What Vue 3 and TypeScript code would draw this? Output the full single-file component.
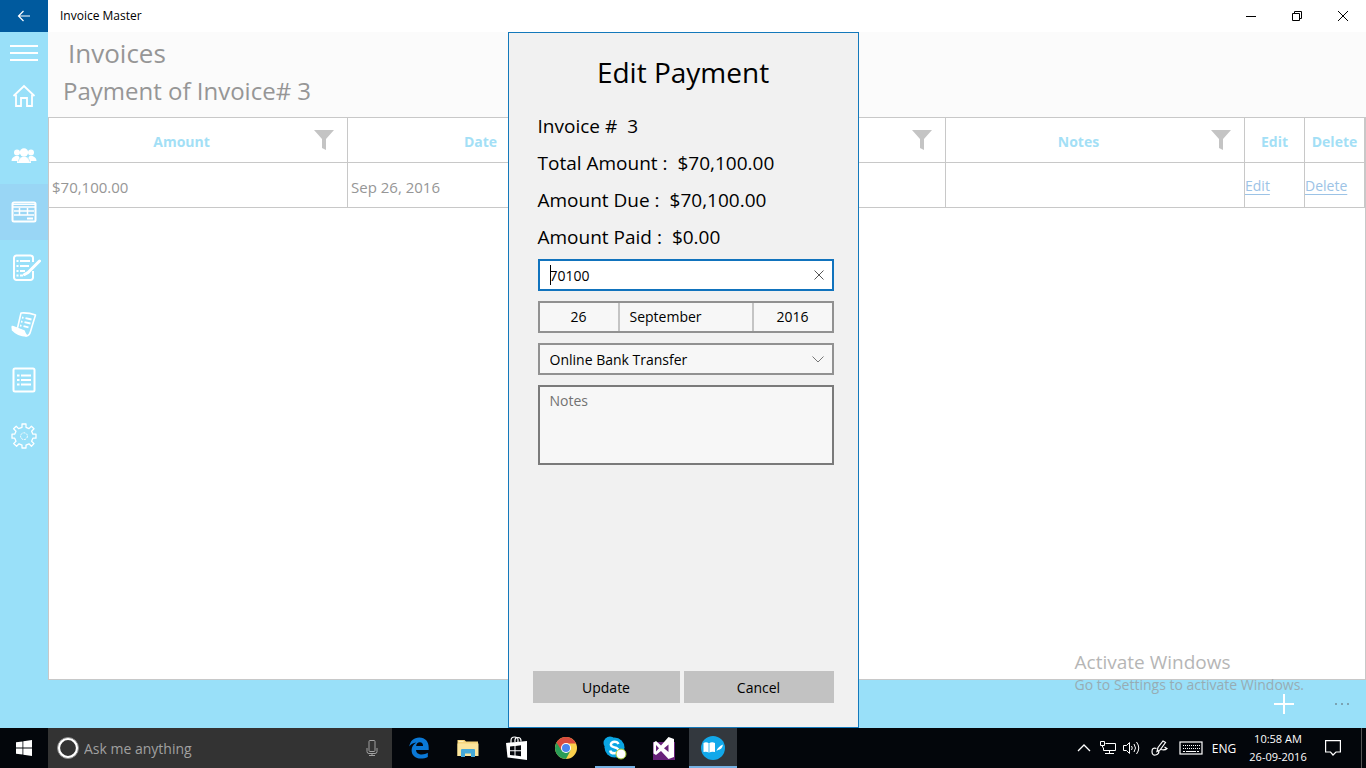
<script setup lang="ts">
import { ref } from 'vue'

interface Payment {
  id: number
  amount: string
  date: string
  method: string
  notes: string
}

interface Summary {
  label: string
  value: string
}

const payments: Payment[] = [
  { id: 1, amount: '$70,100.00', date: 'Sep 26, 2016', method: '', notes: '' },
]

const columns: string[] = ['Amount', 'Date', 'Payment Method', 'Notes']

const summary: Summary[] = [
  { label: 'Invoice #', value: '3' },
  { label: 'Total Amount :', value: '$70,100.00' },
  { label: 'Amount Due :', value: '$70,100.00' },
  { label: 'Amount Paid :', value: '$0.00' },
]

const methods: string[] = ['Online Bank Transfer', 'Cash', 'Cheque']

const amount = ref('70100')
const method = ref('Online Bank Transfer')
const notes = ref('')
</script>

<template>
  <div class="desktop">
    <header class="titlebar">
      <button class="back" type="button" aria-label="Back">
        <svg width="14" height="12" viewBox="0 0 14 12" fill="none" stroke="#fff" stroke-width="1.2">
          <path d="M13 6H1.5M6.5 1L1.5 6l5 5" />
        </svg>
      </button>
      <span class="app-name">Invoice Master</span>
      <div class="window-buttons">
        <button type="button" aria-label="Minimize">
          <svg width="12" height="12" viewBox="0 0 12 12" stroke="#000"><path d="M1 6.5h10" /></svg>
        </button>
        <button type="button" aria-label="Restore">
          <svg width="12" height="12" viewBox="0 0 12 12" fill="none" stroke="#000">
            <path d="M1.5 3.5h7v7h-7zM3.5 3.5v-2h7v7h-2" />
          </svg>
        </button>
        <button type="button" aria-label="Close">
          <svg width="12" height="12" viewBox="0 0 12 12" stroke="#000"><path d="M1 1l10 10M11 1L1 11" /></svg>
        </button>
      </div>
    </header>

    <div class="app">
      <div class="workspace">
        <nav class="sidebar" aria-label="Main">
          <button class="nav-item menu" type="button" aria-label="Menu">
            <svg width="28" height="18" viewBox="0 0 28 18" stroke="#fff" stroke-width="2">
              <path d="M0 2h28M0 9h28M0 16h28" />
            </svg>
          </button>
          <button class="nav-item home" type="button" aria-label="Home">
            <svg width="24" height="24" viewBox="0 0 24 24" fill="none" stroke="#fff" stroke-width="1.8">
              <path d="M1.5 12L12 2l10.500 10" />
              <path d="M4 10.500V22h5v-8h6v8h5V10.500" />
            </svg>
          </button>
          <button class="nav-item" type="button" aria-label="Customers">
            <svg width="26" height="16" viewBox="0 0 26 16" fill="#fff">
              <circle cx="6" cy="4.500" r="3" />
              <circle cx="20" cy="4.500" r="3" />
              <path d="M.5 13c0-3 2-4 4-5h3l1 1.500L7 13zM25.500 13c0-3-2-4-4-5h-3l-1 1.500L19 13z" />
              <circle cx="13" cy="4.500" r="4.200" />
              <path d="M6 15c0-4 2-5 4.500-6h5c2.500 1 4.500 2 4.500 6z" />
              <path d="M7.500 13.500c0-2 1-3.500 3-4.300M18.500 13.500c0-2-1-3.500-3-4.300" fill="none" stroke="#99e0f9" stroke-width=".6" />
            </svg>
          </button>
          <button class="nav-item selected" type="button" aria-label="Invoices" aria-current="page">
            <svg width="26" height="22" viewBox="0 0 26 22" fill="none" stroke="#fff">
              <rect x="1.500" y="1.500" width="23" height="19" rx="1.500" stroke-width="2" />
              <path d="M2 6h22M3 10h20M3 14h20" stroke-width="1.600" />
              <path d="M2 3.500h22" stroke-width="1" />
              <path d="M8.500 7v7M16.500 7v7" stroke-width="1.500" />
              <path d="M16 17.500h6" stroke-width="2" />
            </svg>
          </button>
          <button class="nav-item" type="button" aria-label="Estimates">
            <svg width="34" height="28" viewBox="-4 0 34 28" fill="none" stroke="#fff" stroke-width="2">
              <path d="M22 8V4a2.500 2.500 0 0 0-2.500-2.500h-14A2.500 2.500 0 0 0 3 4v19.500A2.500 2.500 0 0 0 5.500 26h14a2.500 2.500 0 0 0 2.500-2.500V17" />
              <path d="M9 7h10M9 12h9M9 17h5M9 21.500h3M5.500 7h2M5.500 12h2M5.500 17h2M5.500 21.500h2" stroke-width="1.800" />
              <path d="M28.500 7L17 18.500l-3.500 2" stroke-width="3" stroke-linecap="round" />
            </svg>
          </button>
          <button class="nav-item" type="button" aria-label="Receipts">
            <svg width="26" height="26" viewBox="0 0 26 26" fill="none" stroke="#fff" stroke-width="1.600">
              <path d="M6.500 17L10 2q8-.5 14.500 2-2.500 8-5 16.500-1 4-4 4.500L2 18q-1-1-.5-2.500L13 20q1 3 2.500 4.500" stroke-linejoin="round" />
              <path d="M1.500 16L13 20.500q0 3 2.500 4.500-9-.5-14-6z" fill="#fff" />
              <path d="M11 6.500l1.500.3M14.500 7.200l6 1.300M10 10.500l1.500.3M13.500 11.200l6 1.300M9 14.500l1.500.3M12.500 15.200l5 1.200" stroke-width="1.800" />
            </svg>
          </button>
          <button class="nav-item" type="button" aria-label="Items">
            <svg width="24" height="26" viewBox="0 0 24 26" fill="none" stroke="#fff" stroke-width="2">
              <rect x="1.500" y="1.500" width="21" height="23" rx="1.500" />
              <path d="M5 8.500h2.500M5 13h2.500M5 17.500h2.500M9 8.500h10M9 13h10M9 17.500h10" stroke-width="1.800" />
            </svg>
          </button>
          <button class="nav-item" type="button" aria-label="Settings">
            <svg width="26" height="26" viewBox="0 0 26 26" fill="none" stroke="#fff" stroke-width="1.300" stroke-linejoin="round">
              <path d="M11 1h4v3.300l3 1.300 2.400-2.400 2.600 2.600-2.400 2.400 1.300 3H25v4h-3.100l-1.300 3 2.400 2.400-2.600 2.600-2.400-2.400-3 1.300V25h-4v-2.900l-3-1.300-2.400 2.400L2.600 20.600 5 18.200l-1.300-3H1v-4h2.700l1.300-3-2.400-2.400 2.600-2.600L7.600 5.600l3.400-1.300z" />
              <circle cx="13" cy="13.200" r="3.400" stroke-width="1" stroke-dasharray="2 1" />
            </svg>
          </button>
        </nav>

        <main class="page">
          <div class="page-head">
            <h1>Invoices</h1>
            <h2>Payment of Invoice# 3</h2>
          </div>
          <div class="grid-frame">
            <table class="grid">
              <colgroup>
                <col v-for="c in columns" :key="c" />
                <col class="narrow" />
                <col class="narrow" />
              </colgroup>
              <thead>
                <tr>
                  <th v-for="c in columns" :key="c" scope="col">
                    <div class="head-cell">
                      <span>{{ c }}</span>
                      <button type="button" :aria-label="'Filter ' + c">
                        <svg width="20" height="20" viewBox="0 0 20 20" fill="#c4c4c4">
                          <path d="M0 0h20l-8 9v11l-4-2V9z" />
                        </svg>
                      </button>
                    </div>
                  </th>
                  <th scope="col">Edit</th>
                  <th scope="col">Delete</th>
                </tr>
              </thead>
              <tbody>
                <tr v-for="p in payments" :key="p.id">
                  <td>{{ p.amount }}</td>
                  <td>{{ p.date }}</td>
                  <td>{{ p.method }}</td>
                  <td>{{ p.notes }}</td>
                  <td class="action"><a href="#edit">Edit</a></td>
                  <td class="action"><a href="#delete">Delete</a></td>
                </tr>
              </tbody>
            </table>
          </div>
        </main>
      </div>

      <footer class="commandbar">
        <button type="button" aria-label="Add">
          <svg width="20" height="20" viewBox="0 0 20 20" stroke="#fff" stroke-width="2"><path d="M0 10h20M10 0v20" /></svg>
        </button>
        <button type="button" aria-label="More">
          <svg width="16" height="4" viewBox="0 0 16 4" fill="#7ba3b3">
            <path d="M1 1h2v2H1zM7 1h2v2H7zM13 1h2v2h-2z" />
          </svg>
        </button>
      </footer>

      <div class="overlay">
        <form class="dialog" role="dialog" aria-labelledby="dialog-title" @submit.prevent>
          <h3 id="dialog-title">Edit Payment</h3>
          <dl class="summary">
            <div v-for="s in summary" :key="s.label">
              <dt>{{ s.label }}</dt>
              <dd>{{ s.value }}</dd>
            </div>
          </dl>
          <div class="fields">
            <div class="field amount">
              <input v-model="amount" type="text" aria-label="Amount" />
              <button type="button" aria-label="Clear" @click="amount = ''">
                <svg width="10" height="10" viewBox="0 0 10 10" stroke="#555">
                  <path d="M.5.5l9 9M9.500.5l-9 9" />
                </svg>
              </button>
            </div>
            <button class="field date" type="button" aria-label="Payment date">
              <span>26</span>
              <span class="month">September</span>
              <span>2016</span>
            </button>
            <div class="field method">
              <select v-model="method" aria-label="Payment method">
                <option v-for="m in methods" :key="m">{{ m }}</option>
              </select>
              <svg width="12" height="7" viewBox="0 0 12 7" fill="none" stroke="#777"><path d="M.5.5L6 6l5.500-5.500" /></svg>
            </div>
            <textarea v-model="notes" class="field notes" placeholder="Notes" aria-label="Notes"></textarea>
          </div>
          <div class="actions">
            <button type="submit">Update</button>
            <button type="button">Cancel</button>
          </div>
        </form>
      </div>
      <div class="activation">
        <strong>Activate Windows</strong>
        <span>Go to Settings to activate Windows.</span>
      </div>
    </div>

    <div class="taskbar">
      <button class="start" type="button" aria-label="Start">
        <svg width="16" height="16" viewBox="0 0 16 16" fill="#fff">
          <path d="M0 2.300L6.500 1.400v6.200H0zM7.300 1.300L16 0v7.600H7.300zM0 8.400h6.500v6.200L0 13.700zM7.300 8.400H16V16l-8.700-1.300z" />
        </svg>
      </button>
      <label class="search">
        <svg width="22" height="22" viewBox="0 0 22 22" fill="none" stroke="#fff"><circle cx="11" cy="11" r="9.200" stroke-width="2.600" /><circle cx="11" cy="11" r="10.500" stroke="#888" stroke-width="1" /></svg>
        <input type="text" placeholder="Ask me anything" aria-label="Search" />
        <svg width="12" height="18" viewBox="0 0 12 18" fill="none" stroke="#a0a0a0">
          <rect x="3" y="1.500" width="6" height="11" rx="1" />
          <path d="M1 9v3.500q0 2 2 2h6q2 0 2-2V9M6 14.500v2M3 16.500h6" />
        </svg>
      </label>
      <div class="pinned">
        <button type="button" aria-label="Edge">
          <svg width="20" height="22" viewBox="0 0 20 22" fill="#0a78d6">
            <path d="M.3 9.600C.9 4.200 4.800.5 10.300.5c6 0 9.400 4.200 9.400 9.900v2.500H7c.2 3 2.700 4.500 5.800 4.500 2.200 0 4.200-.6 6-1.700v4.200c-2 1.100-4.400 1.600-6.900 1.600-5.600 0-9.300-3.200-9.300-8.300 0-3.300 1.800-6 4.700-7.600C4.200 6 1.800 7.200.3 9.600zM7.100 9.100h7c0-2.300-1-3.900-3.400-3.900-2 0-3.300 1.600-3.600 3.900z" />
          </svg>
        </button>
        <button type="button" aria-label="File Explorer">
          <svg width="22" height="18" viewBox="0 0 22 18">
            <path d="M.5 1h7l1.500 1.500h12V17H.5z" fill="#f5d57d" />
            <path d="M.5 4.500h21V17H.5z" fill="#fbe59d" />
            <path d="M1.500 2h5v1h-5z" fill="#fff1c0" />
            <path d="M4 18v-7q0-1 1-1h12q1 0 1 1v7h-4v-3.500H8V18z" fill="#45a9d8" />
          </svg>
        </button>
        <button type="button" aria-label="Store">
          <svg width="22" height="24" viewBox="0 0 22 24">
            <path d="M0 7l21-2v19L1.500 21.500z" fill="#fff" />
            <path d="M5 7V4.500Q5 1 8.500 1t3.500 3V6M9 6V4q0-2.500 3-2.500T15 5v.5" fill="none" stroke="#fff" stroke-width="1.200" />
            <path d="M4 10.500L8.500 10v4.200H4zM9.500 9.900l5.500-.6v4.900H9.500zM4 15.200h4.500v4.200L4 18.900zM9.500 15.200H15v5l-5.500-.6z" fill="#05070c" />
          </svg>
        </button>
        <button type="button" aria-label="Chrome">
          <svg width="22" height="22" viewBox="0 0 22 22">
            <circle cx="11" cy="11" r="11" fill="#fbd04b" />
            <path d="M11 11L1.500 5.500A11 11 0 0 0 11 22l4.500-8.500z" fill="#2a9d58" />
            <path d="M1.500 5.500A11 11 0 0 1 20.500 5.500L21 6.500H11L6.500 13.500z" fill="#d94b3e" />
            <circle cx="11" cy="11" r="5" fill="#fff" />
            <circle cx="11" cy="11" r="4" fill="#4a85ee" />
          </svg>
        </button>
        <button class="running" type="button" aria-label="Skype">
          <svg width="24" height="24" viewBox="0 0 24 24">
            <circle cx="7" cy="7" r="6.500" fill="#0aa5e3" />
            <circle cx="11.500" cy="11.500" r="10" fill="#0aa5e3" />
            <circle cx="16" cy="16" r="6" fill="#0aa5e3" />
            <path d="M15.500 8q-1-2.200-4-2.200T7.800 8.500q0 2 3.700 2.800t4 3q0 3-4 3T7.200 14.500" fill="none" stroke="#fff" stroke-width="2.400" />
            <circle cx="18" cy="18" r="5" fill="#fff" stroke="#9fc52b" stroke-width="1" />
          </svg>
        </button>
        <button type="button" aria-label="Visual Studio">
          <svg width="22" height="24" viewBox="0 0 22 24">
            <path d="M0 6h22v18H0z" fill="#68217a" />
            <path d="M15.500 1L21 3v18l-5.500 2L8 15l-5 4-2.500-1.500v-11L3 5l5 4.500zM15.500 8.500L11 12.300l4.500 3.700zM3 9v6.500l3-3.200z" fill="#fff" fill-rule="evenodd" />
          </svg>
        </button>
        <button class="running active" type="button" aria-label="Invoice Master">
          <svg width="24" height="24" viewBox="0 0 24 24">
            <circle cx="12" cy="12" r="12" fill="#12a8ea" />
            <path d="M2.500 7q3-1.500 5.500.5Q10.500 5.500 14 7v9q-3.500-1-6 .8Q5.500 15 2.500 16z" fill="#fff" />
            <path d="M8 7.500V17" stroke="#12a8ea" stroke-width=".8" />
            <path d="M15.500 15q1-4 6.500-6.500-1 5-5 5.500z" fill="#fff" />
          </svg>
        </button>
      </div>
      <div class="tray">
        <button type="button" class="chevron" aria-label="Show hidden icons">
          <svg width="14" height="8" viewBox="0 0 14 8" fill="none" stroke="#fff" stroke-width="1.300"><path d="M1 7l6-6 6 6" /></svg>
        </button>
        <button type="button" class="network" aria-label="Network">
          <svg width="17" height="14" viewBox="0 0 17 14" fill="none" stroke="#fff">
            <path d="M5.500 2.500h10v7h-12v-3M.5.500h4v4h-4zM2.500 4.500v2M9.500 9.500v3M5 12.500h9" />
          </svg>
        </button>
        <button type="button" class="volume" aria-label="Volume">
          <svg width="18" height="14" viewBox="0 0 18 14" fill="none" stroke="#fff">
            <path d="M.5 4.500h3l3-3v11l-3-3h-3zM8.500 5q1.500 2 0 4M11 3q3 4 0 8M13.500 1q4.500 6 0 12" />
          </svg>
        </button>
        <button type="button" class="pen" aria-label="Pen">
          <svg width="18" height="16" viewBox="0 0 18 16" fill="none" stroke="#fff" stroke-width="1.200">
            <path d="M6 11.500l1-4L12 1l2.500 1.500L9 10zM5.500 8.500Q1 7 1 11.500q0 4 3.500 3.500t3.500-4.500M10 9.500q4 1 6-1l-2.500-1.500" />
          </svg>
        </button>
        <button type="button" class="keyboard" aria-label="Touch keyboard">
          <svg width="24" height="14" viewBox="0 0 24 14" fill="none" stroke="#fff">
            <rect x="1" y="1" width="22" height="12" stroke-width="1.200" />
            <path d="M4 4.500h17M4 7.500h17" stroke-dasharray="1 1" />
            <path d="M4 10.500h2M7 10.500h10M18 10.500h2" />
          </svg>
        </button>
        <button type="button" class="lang">ENG</button>
        <button type="button" class="clock"><span>10:58 AM</span><span>26-09-2016</span></button>
        <button type="button" class="notice" aria-label="Action center">
          <svg width="16" height="16" viewBox="0 0 16 16" fill="none" stroke="#fff" stroke-width="1.200">
            <path d="M.6.600h14.800v11.400H11L8 15l-2.500-3H.600z" />
          </svg>
        </button>
      </div>
    </div>
  </div>
</template>

<style>
body {
  margin: 0;
}
</style>

<style scoped>
.desktop {
  display: flex;
  flex-direction: column;
  min-height: 100vh;
  font-family: 'Open Sans', 'Liberation Sans', sans-serif;
  font-size: 14px;
  color: #000;
  background: #fff;
}

.desktop *,
.desktop {
  box-sizing: border-box;
}

button,
input,
select,
textarea {
  font: inherit;
  color: inherit;
  margin: 0;
  padding: 0;
  border: 0;
  border-radius: 0;
  background: none;
  outline: none;
}

button {
  display: flex;
  align-items: center;
  justify-content: center;
}

svg {
  display: block;
  flex: none;
}

h1,
h2,
h3,
dl,
dd {
  margin: 0;
  font-weight: 400;
}

.titlebar {
  display: flex;
  align-items: center;
  height: 32px;
}

.back {
  width: 48px;
  height: 32px;
  background: #005a9e;
}

.app-name {
  margin-left: 12px;
  font-size: 12px;
  line-height: 30px;
}

.window-buttons {
  display: flex;
  margin-left: auto;
}

.window-buttons button {
  width: 46px;
  height: 32px;
}

.app {
  position: relative;
  display: flex;
  flex: 1;
  flex-direction: column;
  background: #99e0f9;
}

.workspace {
  display: flex;
  flex: 1;
}

.sidebar {
  width: 48px;
}

.nav-item {
  width: 100%;
  height: 56px;
}

.nav-item.menu {
  height: 42px;
}

.nav-item.home {
  height: 44px;
  margin-bottom: 10px;
}

.nav-item.selected {
  background: #99d6f5;
}

.page {
  display: flex;
  flex: 1;
  flex-direction: column;
  background: #fff;
}

.page-head {
  height: 85px;
  padding: 2px 15px;
  color: #969696;
  background: #fbfbfb;
}

h1 {
  padding-left: 5px;
  font-size: 26px;
  line-height: 38px;
}

h2 {
  font-size: 24px;
  line-height: 38px;
}

.grid-frame {
  flex: 1;
  border: 1px solid #c8c8c8;
}

.grid {
  width: 100%;
  table-layout: fixed;
  border-spacing: 0;
  color: #969696;
}

.narrow {
  width: 60px;
}

th,
td {
  height: 45px;
  padding: 0;
  border-right: 1px solid #c8c8c8;
  border-bottom: 1px solid #c8c8c8;
}

th {
  padding-top: 2px;
  font-weight: 700;
  color: #a3dff6;
}

td {
  padding: 4px 3px 0;
  font-size: 15px;
}

td.action {
  padding: 0;
  font-size: 14px;
}

td a {
  color: #9cc3e6;
  text-underline-offset: 3px;
}

.head-cell {
  display: flex;
  align-items: center;
  margin-top: -2px;
  padding-right: 13px;
}

.head-cell span {
  flex: 1;
  padding-top: 2px;
}

.commandbar {
  display: flex;
  align-items: center;
  justify-content: flex-end;
  height: 48px;
}

.commandbar button {
  width: 48px;
  height: 48px;
}

.commandbar button:first-child {
  margin-right: 10px;
}

.overlay {
  position: absolute;
  inset: 0;
  display: flex;
  justify-content: center;
}

.dialog {
  display: flex;
  flex-direction: column;
  width: 351px;
  padding: 19px 24px 24px;
  border: 1px solid #1479bb;
  background: #f1f1f1;
}

h3 {
  font-size: 28px;
  line-height: 40px;
  text-align: center;
}

.summary {
  margin: 16px 5px 3px;
  font-size: 19px;
  line-height: 37px;
}

.summary div {
  display: flex;
  gap: 10px;
}

.fields {
  display: grid;
  gap: 10px;
  padding-left: 5px;
}

.field {
  width: 100%;
  height: 32px;
  border: 2px solid #919191;
  background: #f7f7f7;
}

.amount {
  position: relative;
  display: flex;
  border-color: #1173bd;
  background: #fff;
}

.amount::before {
  content: '';
  position: absolute;
  top: 4px;
  left: 10px;
  width: 1px;
  height: 20px;
  background: #000;
}

.amount input {
  flex: 1;
  min-width: 0;
  padding-left: 10px;
}

.amount button {
  width: 26px;
}

.date {
  display: grid;
  grid-template-columns: 78fr 136fr 78fr;
}

.date span {
  line-height: 28px;
}

.date .month {
  padding-left: 10px;
  border: solid #c4c4c4;
  border-width: 0 2px;
  text-align: left;
}

.method {
  position: relative;
  display: flex;
  align-items: center;
}

.method select {
  width: 100%;
  height: 28px;
  padding: 0 30px 0 10px;
  appearance: none;
}

.method svg {
  position: absolute;
  right: 8px;
  pointer-events: none;
}

.notes {
  display: block;
  height: 80px;
  padding: 4px 10px;
  border-color: #7a7a7a;
  resize: none;
}

.notes::placeholder {
  color: #727272;
}

.actions {
  display: grid;
  grid-template-columns: 49fr 50fr;
  gap: 4px;
  margin-top: auto;
}

.actions button {
  height: 32px;
  background: #c2c2c2;
}

.activation {
  position: absolute;
  right: 62px;
  bottom: 32px;
  display: flex;
  flex-direction: column;
  color: #979797;
  opacity: 0.7;
  pointer-events: none;
}

.activation strong {
  font-size: 19px;
  font-weight: 400;
  line-height: 24px;
}

.activation span {
  line-height: 22px;
}

.taskbar {
  display: flex;
  height: 40px;
  color: #fff;
  background: #03060b;
}

.start {
  width: 48px;
}

.search {
  display: flex;
  align-items: center;
  width: 344px;
  padding: 0 14px 0 9px;
  background: #333;
}

.search input {
  flex: 1;
  min-width: 0;
  padding-left: 5px;
}

.search input::placeholder {
  color: #a0a0a0;
}

.pinned {
  display: flex;
  gap: 1px;
  margin-left: 3px;
}

.pinned button {
  position: relative;
  width: 48px;
}

.pinned .active {
  background: #33383e;
}

.running::after {
  content: '';
  position: absolute;
  right: 4px;
  bottom: 0;
  left: 4px;
  height: 2px;
  background: #76b1e3;
}

.running.active::after {
  right: 0;
  left: 0;
}

.tray {
  display: flex;
  margin-left: auto;
  padding-right: 4px;
  font-size: 12px;
}

.tray button {
  flex: none;
}

.chevron,
.network,
.volume {
  width: 24px;
}

.pen {
  width: 32px;
}

.keyboard {
  width: 30px;
}

.lang {
  width: 36px;
}

.clock {
  flex-direction: column;
  width: 72px;
  font-size: 11px;
  line-height: 18px;
}

.notice {
  width: 48px;
  padding-right: 9px;
  border-right: 1px solid #555;
}
</style>
